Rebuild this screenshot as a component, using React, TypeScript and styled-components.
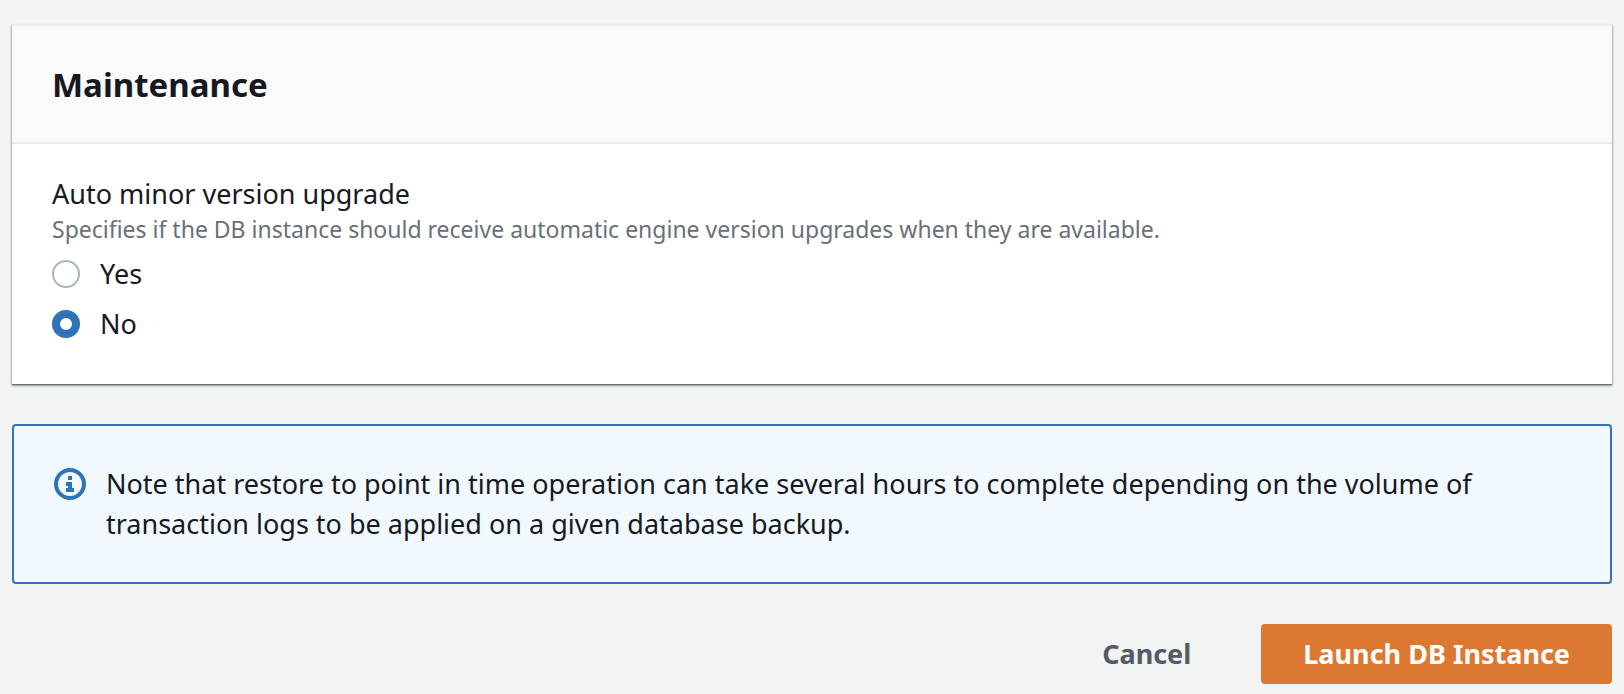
import React, { useState } from "react";
import styled, { createGlobalStyle } from "styled-components";

const GlobalStyle = createGlobalStyle`
  *, *::before, *::after { box-sizing: border-box; }
  body {
    margin: 0;
    background: #f2f3f3;
    color: #16191f;
    font-family: "Noto Sans", "Open Sans", sans-serif;
    font-size: 27px;
    line-height: 40px;
  }
`;

const Page = styled.main`
  display: flex;
  flex-direction: column;
  gap: 40px;
  padding: 24px 12px 10px;
`;

const Card = styled.section`
  background: #ffffff;
  border-top: 2px solid #eaeded;
  box-shadow: 0 2px 2px 0 rgba(0, 28, 36, 0.3), 1px 1px 2px 0 rgba(0, 28, 36, 0.15),
    -1px 1px 2px 0 rgba(0, 28, 36, 0.15), 0 1px 1px 0 rgba(0, 28, 36, 0.3);
`;

const CardHeader = styled.header`
  padding: 37px 40px 35px;
  background: #fafafa;
  border-bottom: 2px solid #eaeded;
`;

const Title = styled.h2`
  margin: 0;
  font-size: 33px;
  line-height: 44px;
  font-weight: 700;
`;

const Field = styled.fieldset`
  margin: 0;
  padding: 30px 40px 40px;
  border: 0;
`;

const Legend = styled.legend`
  float: left;
  width: 100%;
  padding: 0;
`;

const Hint = styled.p`
  clear: both;
  margin: 0;
  font-size: 23px;
  line-height: 30px;
  color: #687078;
`;

const Options = styled.div`
  display: flex;
  flex-direction: column;
  gap: 10px;
  padding-top: 10px;
`;

const Option = styled.label`
  display: flex;
  align-items: center;
  align-self: flex-start;
  gap: 20px;
`;

const Radio = styled.input`
  appearance: none;
  width: 28px;
  height: 28px;
  margin: 0;
  border: 2px solid #aab7b8;
  border-radius: 50%;
  background: #ffffff;

  &:checked {
    border: 8px solid #2e73b8;
  }
`;

const Note = styled.div`
  display: flex;
  gap: 20px;
  padding: 38px 80px 38px 40px;
  background: #f1f9ff;
  border: 2px solid #2e73b8;
  border-radius: 4px;
`;

const InfoIcon = styled.svg`
  flex: none;
  width: 32px;
  height: 32px;
  margin-top: 4px;
`;

const NoteText = styled.p`
  margin: 0;
`;

const Actions = styled.div`
  display: flex;
  justify-content: flex-end;
  gap: 28px;
`;

const Button = styled.button<{ $primary?: boolean }>`
  height: 60px;
  padding: 0 42px;
  border: 0;
  border-radius: 4px;
  background: ${(p) => (p.$primary ? "#dd7832" : "transparent")};
  color: ${(p) => (p.$primary ? "#ffffff" : "#545b64")};
  font: inherit;
  font-weight: 700;
  cursor: pointer;
`;

const choices = ["Yes", "No"];

export default function App() {
  const [upgrade, setUpgrade] = useState("No");

  return (
    <>
      <GlobalStyle />
      <Page>
        <Card>
          <CardHeader>
            <Title>Maintenance</Title>
          </CardHeader>
          <Field aria-describedby="upgrade-hint">
            <Legend>Auto minor version upgrade</Legend>
            <Hint id="upgrade-hint">
              Specifies if the DB instance should receive automatic engine version upgrades when
              they are available.
            </Hint>
            <Options>
              {choices.map((choice) => (
                <Option key={choice}>
                  <Radio
                    type="radio"
                    name="upgrade"
                    value={choice}
                    checked={upgrade === choice}
                    onChange={() => setUpgrade(choice)}
                  />
                  {choice}
                </Option>
              ))}
            </Options>
          </Field>
        </Card>
        <Note role="note">
          <InfoIcon viewBox="0 0 32 32" aria-hidden="true">
            <circle cx="16" cy="16" r="14" fill="none" stroke="#2e73b8" strokeWidth="4" />
            <path d="M14 8h4v4h-4zM12 14h6v6h2v4h-8v-4h2v-2h-2z" fill="#2e73b8" />
          </InfoIcon>
          <NoteText>
            Note that restore to point in time operation can take several hours to complete
            depending on the volume of transaction logs to be applied on a given database backup.
          </NoteText>
        </Note>
        <Actions>
          <Button type="button">Cancel</Button>
          <Button type="button" $primary>
            Launch DB Instance
          </Button>
        </Actions>
      </Page>
    </>
  );
}
